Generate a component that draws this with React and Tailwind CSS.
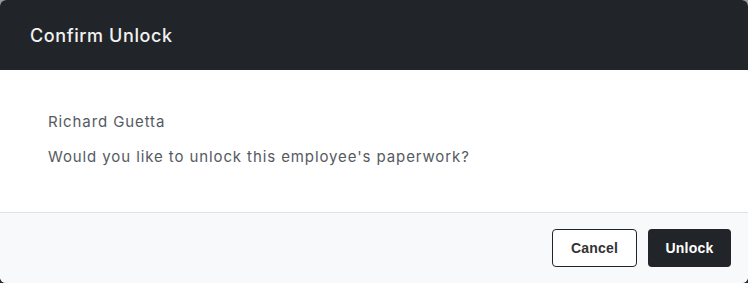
export default function App() {
  return (
    <div className="w-[748px] h-[283px] bg-gradient-to-b from-[#9a9a9a] to-[#2a2a2a]">
      <div className="w-full h-full rounded-[6px] overflow-hidden flex flex-col bg-white" style={{ fontFamily: 'Inter, "Noto Sans", sans-serif' }}>
        <div className="h-[70px] shrink-0 bg-[#212529] flex items-center px-[30px]">
          <h2 className="text-[18px] font-medium text-[#f1f1f1] tracking-[0.6px]">Confirm Unlock</h2>
        </div>
        <div className="flex-1 px-[48px] pt-[41px] text-[15px] text-[#555a5f] tracking-[0.9px]">
          <p className="leading-[22px]">Richard Guetta</p>
          <p className="leading-[22px] mt-[13px]">Would you like to unlock this employee's paperwork?</p>
        </div>
        <div className="h-[71px] shrink-0 bg-[#f8f9fa] border-t border-[#dee2e6] flex items-center justify-end gap-[11px] pr-[17px]" style={{ fontFamily: '"Liberation Sans", Arial, sans-serif' }}>
          <button className="w-[85px] h-[38px] rounded-[4px] border border-[#212529] bg-white text-[#333] text-[14px] font-bold tracking-[0.2px]">
            Cancel
          </button>
          <button className="w-[83px] h-[38px] rounded-[4px] bg-[#212529] text-white text-[14px] font-bold tracking-[0.2px]">
            Unlock
          </button>
        </div>
      </div>
    </div>
  );
}
